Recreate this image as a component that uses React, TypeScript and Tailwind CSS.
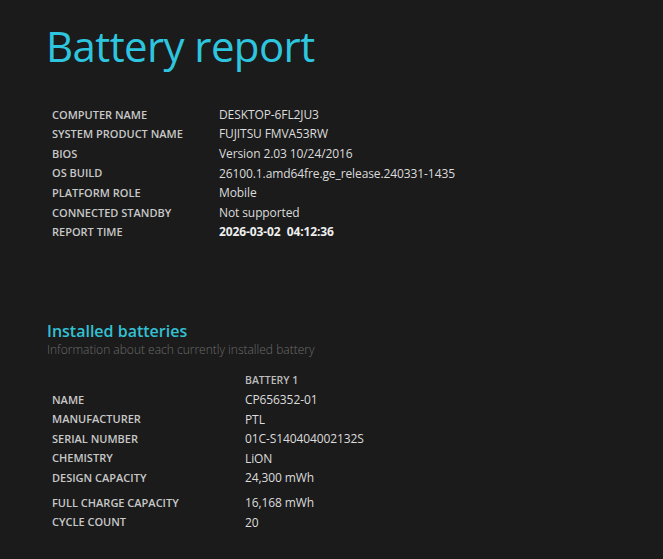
const font = { fontFamily: '"Segoe UI", "Open Sans", "Noto Sans", sans-serif' }

const info: [string, string, boolean?][] = [
  ["COMPUTER NAME", "DESKTOP-6FL2JU3"],
  ["SYSTEM PRODUCT NAME", "FUJITSU FMVA53RW"],
  ["BIOS", "Version 2.03 10/24/2016"],
  ["OS BUILD", "26100.1.amd64fre.ge_release.240331-1435"],
  ["PLATFORM ROLE", "Mobile"],
  ["CONNECTED STANDBY", "Not supported"],
  ["REPORT TIME", "2026-03-02  04:12:36", true],
]

const battery: [string, string][] = [
  ["NAME", "CP656352-01"],
  ["MANUFACTURER", "PTL"],
  ["SERIAL NUMBER", "01C-S140404002132S"],
  ["CHEMISTRY", "LiON"],
  ["DESIGN CAPACITY", "24,300 mWh"],
]

const battery2: [string, string][] = [
  ["FULL CHARGE CAPACITY", "16,168 mWh"],
  ["CYCLE COUNT", "20"],
]

function Row({ label, value, bold, col }: { label: string; value: string; bold?: boolean; col: string }) {
  return (
    <div className="flex h-[19.6px] items-center">
      <div className={`${col} shrink-0 text-[11px] font-semibold text-[#c8c8c8]`}>{label}</div>
      <div className={`whitespace-pre text-[12px] tracking-[-0.1px] ${bold ? "font-bold text-[#eeeeee]" : "text-[#dcdcdc]"}`}>{value}</div>
    </div>
  )
}

export default function App() {
  return (
    <div className="h-[559px] w-[663px] overflow-hidden bg-[#1b1b1b]" style={font}>
      <h1 className="pl-[46px] pt-[16px] text-[42px] font-normal leading-[60px] tracking-[-0.6px] text-[#2ec5df]">Battery report</h1>

      <div className="mt-[29px] pl-[52px]">
        {info.map(([l, v, b]) => (
          <Row key={l} label={l} value={v} bold={b} col="w-[167px]" />
        ))}
      </div>

      <div className="mt-[79px] pl-[47px]">
        <h2 className="text-[16px] font-semibold leading-[20px] text-[#33c1d3]">Installed batteries</h2>
        <p className="text-[12px] font-light leading-[18px] text-[#6b6b6b]">Information about each currently installed battery</p>
      </div>

      <div className="mt-[13px] pl-[52px]">
        <div className="flex h-[18px] items-center">
          <div className="w-[193px]" />
          <div className="text-[10.5px] font-semibold text-[#bdbdbd]">BATTERY 1</div>
        </div>
        {battery.map(([l, v]) => (
          <Row key={l} label={l} value={v} col="w-[193px]" />
        ))}
        <div className="mt-[5px]">
          {battery2.map(([l, v]) => (
            <Row key={l} label={l} value={v} col="w-[193px]" />
          ))}
        </div>
      </div>
    </div>
  )
}
